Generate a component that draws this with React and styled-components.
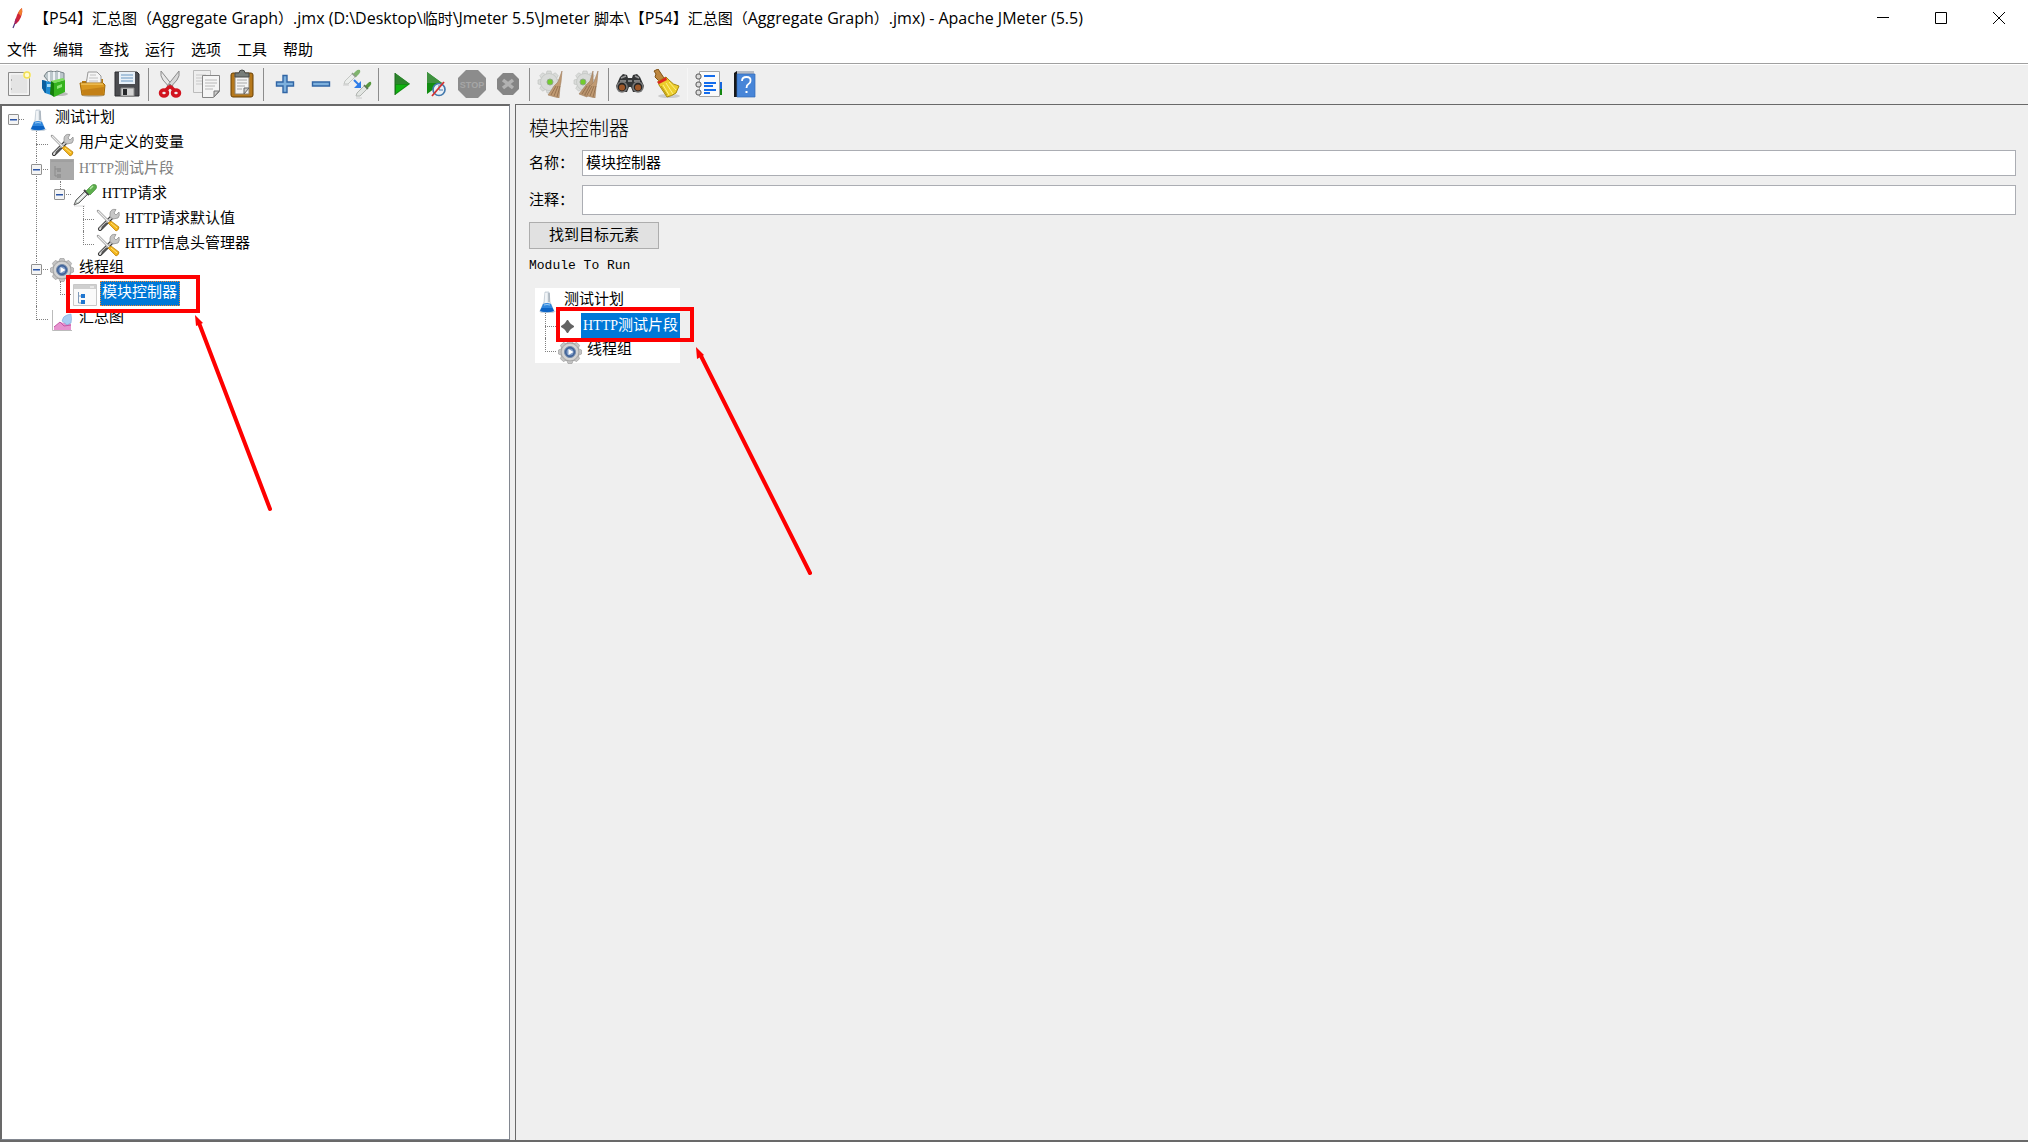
import React, { useState } from "react";
import styled, { createGlobalStyle } from "styled-components";

const GlobalStyle = createGlobalStyle`
  * {
    box-sizing: border-box;
  }
  body {
    margin: 0;
    background: #efefef;
    color: #000;
    font-family: "Liberation Mono", "Noto Sans CJK SC", monospace;
    font-size: 15px;
    text-spacing-trim: space-all;
  }
  button,
  input {
    font: inherit;
    color: inherit;
  }
`;

// Styled Components
const Window = styled.div`
  position: relative;
  display: flex;
  flex-direction: column;
  height: 100vh;
  overflow: hidden;
`;

const TitleBar = styled.header`
  display: flex;
  align-items: center;
  height: 36px;
  padding-left: 8px;
  background: #fff;
`;

const WindowTitle = styled.h1`
  flex: 1;
  margin: 0;
  padding-left: 8px;
  font: 400 15px/36px "Noto Sans CJK SC", sans-serif;
  white-space: pre;
`;

const TitleLatin = styled.span`
  font-family: "Open Sans", sans-serif;
  font-size: 16px;
`;

const WindowButton = styled.button`
  display: flex;
  align-items: center;
  justify-content: center;
  width: 58px;
  height: 36px;
  padding: 0;
  border: none;
  background: none;
  &:hover {
    background: #e5e5e5;
  }
`;

const MenuBar = styled.nav`
  display: flex;
  gap: 16px;
  height: 28px;
  padding-left: 7px;
  background: #fff;
  border-bottom: 1px solid #a0a0a0;
`;

const MenuItem = styled.button`
  padding: 0 0 2px;
  border: none;
  background: none;
  font: 400 15px/24px "Noto Sans", "Noto Sans CJK SC", sans-serif;
`;

const ToolBar = styled.div`
  display: flex;
  align-items: center;
  height: 40px;
  border-top: 1px solid #fff;
`;

const ToolButton = styled.button`
  display: flex;
  align-items: center;
  justify-content: center;
  width: 36px;
  height: 36px;
  padding: 0 0 1px 1px;
  border: none;
  background: none;
`;

const Separator = styled.div`
  width: 1px;
  height: 33px;
  margin: 0 2px 0 4px;
  background: ${(props) => (props.$faint ? "#f6f6f6" : "#8c8c8c")};
`;

const Panes = styled.main`
  flex: 1;
  display: grid;
  grid-template-columns: minmax(200px, 510px) 1fr;
  column-gap: 5px;
  border-bottom: 2px solid #696969;
`;

const TreePane = styled.div`
  background: #fff;
  border: 1px solid #828790;
  border-top: 2px solid #696969;
  border-left: 2px solid #696969;
`;

const EditorPane = styled.section`
  padding: 10px 12px 12px 13px;
  border-top: 1px solid #696969;
  border-left: 1px solid #696969;
`;

const TreeList = styled.ul`
  margin: 0;
  padding: 0;
  list-style: none;
`;

const TreeRow = styled.li`
  display: flex;
  height: 25px;
`;

// one column of the dotted guide lines in front of a node
const Guide = styled.span`
  display: grid;
  grid-template: 14px 11px / 12px 12px;
  width: 24px;
  &:first-child {
    grid-template-columns: 10px 12px;
    width: 22px;
  }
  &:nth-child(n + 3) {
    grid-template-columns: 12px 11px;
    width: 23px;
  }
  &::before {
    content: "";
    grid-area: 1 / 2 / ${(props) => (props.$through ? 3 : 2)} / 3;
    border-left: ${(props) => (props.$line ? "1px dotted #808080" : "none")};
  }
  &::after {
    content: "";
    grid-area: 1 / 2;
    border-bottom: ${(props) => (props.$elbow ? "1px dotted #808080" : "none")};
  }
`;

const Expander = styled.button`
  grid-area: 1 / 1 / 3 / 3;
  place-self: center;
  display: flex;
  align-items: center;
  justify-content: center;
  z-index: 1;
  width: 11px;
  height: 11px;
  margin-top: 2px;
  padding: 0;
  border: 1px solid #919191;
  border-radius: 1px;
  background: #f4f4f4;
  &::before {
    content: "";
    width: 7px;
    height: 1px;
    background: #2c55a5;
    box-shadow: 0 1px 0 #8ea6d3;
  }
`;

const NodeIcon = styled.span`
  display: flex;
  align-items: center;
  justify-content: center;
  width: ${(props) => (props.$small ? "20px" : "24px")};
  height: 25px;
  margin-left: ${(props) => (props.$flush ? "0" : "2px")};
  margin-right: 3px;
  padding-top: 2px;
`;

const NodeLabel = styled.span`
  padding: 0 ${(props) => (props.$focused ? "3px" : "2px")} 0 2px;
  line-height: 26px;
  white-space: nowrap;
  color: ${(props) => (props.$selected ? "#fff" : props.$disabled ? "#808080" : "#000")};
  background: ${(props) => (props.$selected ? "#0078d7" : "none")};
  outline: ${(props) => (props.$focused ? "1px dotted #ff8728" : "none")};
  outline-offset: -1px;
`;

const Latin = styled.span`
  font-family: "Liberation Serif", serif;
  font-size: 14px;
`;

const EditorTitle = styled.h2`
  margin: 0 0 9px;
  font: 300 20px/26px "Noto Sans CJK SC", sans-serif;
`;

const Form = styled.form`
  display: grid;
  grid-template-columns: 53px 1fr;
  grid-template-rows: 26px 30px;
  row-gap: 9px;
  align-items: center;
`;

const FieldLabel = styled.label`
  padding-top: 4px;
  line-height: 24px;
  white-space: nowrap;
`;

const TextInput = styled.input`
  width: 100%;
  height: 100%;
  padding: 0 3px 2px;
  border: 1px solid #abadb3;
  background: #fff;
`;

const FindButton = styled.button`
  display: block;
  width: 130px;
  height: 27px;
  margin: 7px 0;
  padding: 0 0 3px;
  border: 1px solid #adadad;
  background: #e1e1e1;
`;

const Caption = styled.p`
  margin: 0 0 12px;
  font-size: 13px;
  line-height: 20px;
`;

const ModuleTree = styled.div`
  width: 145px;
  margin-left: 6px;
  background: #fff;
`;

const ModuleGuide = styled(Guide)`
  &:first-child {
    grid-template-columns: 10px 11px;
    width: 21px;
  }
`;

const Annotations = styled.svg`
  position: absolute;
  left: 0;
  top: 0;
  pointer-events: none;
`;

const Flask = () => (
  <svg width="20" height="24" viewBox="0 0 20 24">
    <path d="M2 21h17l-3 2H4z" fill="#c9d3dd" />
    <path d="M8 2h4l1 10 4 9q-7 2-14 0l4-9z" fill="#e3e9ee" stroke="#b8c3cd" strokeWidth=".7" />
    <path d="M6 14q4-2 8 0l3 7q-7 2.500-14 0z" fill="#2f86dd" />
    <path d="M4.500 18h11l1.300 3q-7 2-13.600 0z" fill="#0c63c4" />
    <path d="M7 15q3-1 6 0" stroke="#9accf5" fill="none" />
    <path d="M9 3v10" stroke="#fff" />
    <path d="M12 3v9" stroke="#8e9aa5" />
  </svg>
);

const Tools = () => (
  <svg width="24" height="24" viewBox="0 0 24 24">
    <path d="M4 21 16 9" stroke="#333" strokeWidth="4" strokeLinecap="round" />
    <path d="M4 20.500 16 9" stroke="#d0d0d0" strokeWidth="2" />
    <path d="M6 20 11 15" stroke="#555" strokeWidth="2" />
    <path d="M20 1.500q-5-1-6 3.500v4l3 2 5-1q2-2 1-6l-3 3-2-2z" fill="#c7c7c7" stroke="#888" strokeWidth=".7" />
    <path d="M2 3 13 14" stroke="#999" strokeWidth="2.500" strokeLinecap="round" />
    <path d="M2 3 13 14" stroke="#ededed" strokeWidth="1.200" />
    <path d="m12 15 3-2 8 6q0 3-3 4z" fill="#f3b51b" stroke="#b27809" strokeWidth=".7" />
    <path d="m15 15 6 5" stroke="#ffe27a" />
    <circle cx="4" cy="21" r="1" fill="#eee" />
  </svg>
);

const Gear = () => (
  <svg width="24" height="24" viewBox="0 0 24 24">
    <g fill="#c5c5c5" stroke="#969696" strokeWidth=".6">
      {[0, 45, 90, 135, 180, 225, 270, 315].map((a) => (
        <path key={a} d="M8.500 4 10 .5h4L15.500 4z" transform={`rotate(${a} 12 12)`} />
      ))}
      <circle cx="12" cy="12" r="9" />
    </g>
    <circle cx="12" cy="12" r="8" fill="#d4d4d4" />
    <circle cx="12" cy="12" r="5.500" fill="#3b5f98" stroke="#778dab" />
    <circle cx="12" cy="12" r="3.500" fill="#7f9cc6" />
    <path d="m10.500 9 5 3-5 3z" fill="#fff" />
  </svg>
);

const Dropper = () => (
  <svg width="24" height="24" viewBox="0 0 24 24">
    <path d="M1 23h11" stroke="#ddd" />
    <path d="m1 22 2-5 9-9 3 3-9 9z" fill="#c3cac6" stroke="#666" />
    <path d="m4 19 9-9" stroke="#fff" strokeWidth="1.500" />
    <path d="m11 7 5 5" stroke="#444" strokeWidth="2" />
    <path d="m13 8 4-4q3-4 6-2 2 3-2 6l-4 4z" fill="#5cae4c" stroke="#4c9140" strokeWidth=".7" />
    <path d="m17 6 3-3" stroke="#b1e5a2" strokeWidth="1.500" />
  </svg>
);

const FragmentIcon = () => (
  <svg width="24" height="21" viewBox="0 0 24 21">
    <path fill="#a9a9a9" d="M0 0h24v21H0z" />
    <path d="M1 2h22" stroke="#969696" />
    <path d="M5 7v10h4M5 10h4" stroke="#8b8b8b" fill="none" />
    <path d="M7 9h4v4H7zM7 15h4v4H7z" fill="#949494" />
  </svg>
);

const ControllerIcon = () => (
  <svg width="24" height="22" viewBox="0 0 24 22">
    <path d="M.5.5h23v21H.5z" fill="#fafafa" stroke="#c8c8c8" />
    <path d="M1 1h22v4H1z" fill="#cfcfcf" />
    <path d="M17 3h4" stroke="#fff" />
    <path d="M5.500 8v11H9M5.500 12H9" stroke="#7f9aba" fill="none" />
    <path d="M8 10h4v4H8zM8 16h4v4H8z" fill="#1f76d0" />
  </svg>
);

const GraphIcon = () => (
  <svg width="24" height="24" viewBox="0 0 24 24">
    <path d="M2.500 2v20.500H22" stroke="#bbb" fill="none" />
    <path d="M4 22v-3l6-5 4 1 3-2 4 3v6z" fill="#e692cf" />
    <path d="M12 13q1-5 5-6l4-1q1 5 0 9l-4 2z" fill="#a9cdf2" stroke="#79a7d9" strokeWidth=".6" />
    <path d="m4 19 6-5 4 4 7-1" stroke="#c458a5" fill="none" />
  </svg>
);

const Diamond = () => (
  <svg width="13" height="13" viewBox="0 0 13 13">
    <path d="M6 0h1l2 3 1 1 3 2v1l-3 2-1 1-2 3H6l-2-3-1-1-3-2V6l3-2 1-1z" fill="#636363" />
  </svg>
);

const NewFile = () => (
  <svg width="26" height="28" viewBox="0 0 26 28">
    <path d="M2.500 2.500h21v23h-21z" fill="#ececec" stroke="#8b8b8b" />
    <path d="M4 4h18v20H4z" fill="#e4e4e4" stroke="#fafafa" />
    <path d="M5 10h1M5 19h1" stroke="#777" />
    <circle cx="21" cy="5" r="4" fill="#fffbd0" />
    <circle cx="21" cy="5" r="3" fill="none" stroke="#f0dd55" strokeWidth="1.500" />
  </svg>
);

const Templates = () => (
  <svg width="28" height="28" viewBox="0 0 28 28">
    <ellipse cx="18" cy="24" rx="9" ry="2" fill="#bbb" />
    <path d="m3 6 3-4 4-1 3 1 3-1 7 2v9l-10 6z" fill="#bcc7cb" stroke="#788488" />
    <path d="M8 2v9M13 2v9M18 2v9" stroke="#eef3f5" strokeWidth="2" />
    <path d="m1 10 12 3v13l-9-3-3-5z" fill="#1f8bd2" />
    <path d="m1 10 4 1v12l-1 0-3-5z" fill="#0b5f9f" />
    <path d="M6 14h5v3H6z" fill="#a4dafa" />
    <path d="m13 13 11-3v12l-11 5z" fill="#35b31e" />
    <path d="m10 11 12-3 2 2-11 3z" fill="#7bde5c" />
    <path d="m10 11 3 2v14l-4-3z" fill="#167d0b" />
    <path d="m16 16 5-2v3l-5 2z" fill="#8fe879" />
  </svg>
);

const OpenFolder = () => (
  <svg width="30" height="28" viewBox="-3 0 30 28">
    <ellipse cx="14" cy="25" rx="12" ry="2" fill="#c6c1b5" />
    <path d="M3 11h4l1-2h16v5H3z" fill="#b8790f" />
    <path d="M7 15 9 2h9l4 4v9z" fill="#f5f5f5" stroke="#999" />
    <path d="M11 5h6M10 8h9M10 11h9" stroke="#c0c0c0" />
    <path d="M1 13h23l2 2-1 10H3z" fill="#d99820" stroke="#a36a0a" />
    <path d="M2 14h22" stroke="#ffd774" />
    <path d="m3 20 22-3-1 8H4z" fill="#c38016" />
  </svg>
);

const Save = () => (
  <svg width="28" height="28" viewBox="0 0 28 28">
    <path d="M2 2h22l2 2v22H2z" fill="#4b4c50" stroke="#2d2d30" />
    <path d="M6 2h16v12H6z" fill="#e8f0f8" />
    <path d="M8 5h12M8 8h12M8 11h12" stroke="#92b4d2" strokeWidth="1.500" />
    <path d="M8 18h13v8H8z" fill="#d3d3d3" stroke="#888" />
    <path d="M10 19h4v6h-4z" fill="#26272a" />
  </svg>
);

const Cut = () => (
  <svg width="26" height="28" viewBox="0 0 26 28">
    <path d="M4 1q-1 5 2 9l8 9 2-3z" fill="#e8e8e8" stroke="#8b8b8b" />
    <path d="M22 1q1 5-2 9l-8 9-2-3z" fill="#d8d8d8" stroke="#8b8b8b" />
    <circle cx="13" cy="15" r="1" fill="#666" />
    <g fill="none" stroke="#d21520" strokeWidth="3.500">
      <ellipse cx="7" cy="23" rx="3.500" ry="3" />
      <ellipse cx="19" cy="23" rx="3.500" ry="3" />
      <path d="m9 20 3-3 2 0 3 3" />
    </g>
  </svg>
);

const Copy = () => (
  <svg width="30" height="30" viewBox="0 0 30 30">
    <path d="M2.500 1.500h17v22h-17z" fill="#eee" stroke="#bbb" />
    <path d="M5 6h10M5 9h10M5 12h6M5 15h6" stroke="#c8c8c8" />
    <path d="M11.500 6.500h17v16l-6 6h-11z" fill="#f5f5f5" stroke="#858585" />
    <path d="M14 11h12M14 14h12M14 17h10M14 20h8" stroke="#b8b8b8" />
    <path d="M28 22h-5v6z" fill="#ccc" stroke="#777" />
  </svg>
);

const Paste = () => (
  <svg width="28" height="30" viewBox="0 0 28 30">
    <rect x="3" y="4" width="22" height="24" rx="2" fill="#b6781b" stroke="#684004" />
    <path d="M7 6h14v19H7z" fill="#f4f4f4" stroke="#8c8170" />
    <path d="M9 11h10M9 14h10M9 17h8M9 20h5" stroke="#a8a8a8" />
    <path d="M21 19h-5v6z" fill="#ccc" stroke="#666" />
    <path d="M7 4h4q0-3 3-3t3 3h4v4H7z" fill="#777d79" stroke="#484b49" />
  </svg>
);

const Plus = () => (
  <svg width="20" height="20" viewBox="0 0 20 20">
    <path d="M8 1.500h4V8h6.500v4H12v6.500H8V12H1.500V8H8z" fill="#7db0dd" stroke="#3165a5" strokeWidth="1.400" />
  </svg>
);

const Minus = () => (
  <svg width="20" height="20" viewBox="0 0 20 20">
    <path d="M1.500 8h17v4h-17z" fill="#7db0dd" stroke="#3165a5" strokeWidth="1.400" />
  </svg>
);

const Toggle = () => (
  <svg width="30" height="30" viewBox="0 0 30 30">
    <path d="m2 15 1-3 7-7 3 3-7 7z" fill="#eceeec" stroke="#c2c5c2" />
    <path d="m11 5 3-3q2-2 4-1 1 2-1 4l-3 3z" fill="#7fb46c" />
    <path d="m10 4 4 4" stroke="#8c9c86" strokeWidth="1.500" />
    <path d="M1 16h6M14 29h6" stroke="#ccc" />
    <path d="m14 27 1-3 7-7 3 3-7 7z" fill="#e2e5e2" stroke="#b0b4b0" />
    <path d="m23 17 3-3q2-2 3-1 1 2-1 4l-3 3z" fill="#58983f" />
    <path d="m22 16 4 4" stroke="#5d7455" strokeWidth="1.500" />
    <path d="m12 11 5 5" stroke="#2f7de8" strokeWidth="2" />
    <path d="M19 12v7h-7z" fill="#2f7de8" />
  </svg>
);

const Start = () => (
  <svg width="22" height="24" viewBox="-4 0 22 24">
    <path d="m2 1 15 11L2 23z" fill="#128d12" />
    <path d="m2 1 15 11H2z" fill="#2d842d" />
    <path d="m3 13h11L3 21z" fill="#11b511" />
    <path d="M2 1v22" stroke="#1a6b1a" />
  </svg>
);

const StartNoTimers = () => (
  <svg width="22" height="26" viewBox="0 0 22 26">
    <path d="m2 1 15 11L2 23z" fill="#128d12" />
    <path d="m2 1 15 11H2z" fill="#3f923f" />
    <circle cx="14" cy="18.500" r="6" fill="#eaf0f6" stroke="#4379ad" strokeWidth="1.700" />
    <path d="M14 14v5h4" stroke="#497db0" fill="none" />
    <path d="M7 25 19 11" stroke="#d23030" strokeWidth="1.800" />
  </svg>
);

const StopSign = () => (
  <svg width="28" height="28" viewBox="0 0 28 28">
    <path d="M8 0h12l8 8v12l-8 8H8l-8-8V8z" fill="#8c8c8c" />
    <text x="14" y="18" textAnchor="middle" fontFamily="Liberation Sans, sans-serif" fontSize="9" fontWeight="700" fill="#a6a6a6">
      STOP
    </text>
  </svg>
);

const Shutdown = () => (
  <svg width="24" height="24" viewBox="0 0 24 24">
    <path d="M7 1h10l6 6v10l-6 6H7l-6-6V7z" fill="#858585" />
    <path d="m7 8 10 8M17 8 7 16" stroke="#b2b2b2" strokeWidth="3.500" />
  </svg>
);

const Clear = ({ all }) => (
  <svg width="28" height="28" viewBox="0 0 28 28">
    <g fill="#d9dbd9" stroke="#bcbfbc" strokeWidth=".6">
      {[0, 45, 90, 135, 180, 225, 270, 315].map((a) => (
        <path key={a} d="M9 5 10 1h4l1 4z" transform={`rotate(${a} 12 12)`} />
      ))}
      <circle cx="12" cy="12" r="8.500" />
    </g>
    <circle cx={all ? 10 : 13} cy="12" r="3" fill="#72cc2e" stroke="#91a888" />
    {all && <path d="m20 1-3 10-4 4q-4 5-7 9l8 3 4-8 2-7z" fill="#b9946e" stroke="#a07e5e" strokeWidth=".6" />}
    <path d="m25 1-4 11-4 4q-3 5-6 9l11 3 1-11 1-5z" fill="#c09a72" stroke="#a07e5e" strokeWidth=".6" />
    <path d="m19 16-5 9M21 16l-4 10M23 16l-3 11" stroke="#8d6a49" strokeWidth=".8" />
    {all && <path d="m14 16-5 8M17 15l-5 10" stroke="#8d6a49" strokeWidth=".8" />}
  </svg>
);

const Binoculars = () => (
  <svg width="30" height="24" viewBox="0 0 30 24">
    <path d="m5 5 3-3 4 1 1 3h4l1-3 4-1 3 3 4 9-3 6h-8l-2-5h-2l-2 5H4l-3-6z" fill="#343637" />
    <path d="m6 6 5-2M20 4l4 2M5 9h6M19 9h6M13 9h4" stroke="#999" strokeWidth="1.500" />
    <circle cx="7" cy="15" r="5" fill="#252525" stroke="#777" strokeWidth="1.500" />
    <circle cx="23" cy="15" r="5" fill="#252525" stroke="#777" strokeWidth="1.500" />
    <circle cx="7" cy="15.500" r="3" fill="#9c5628" />
    <circle cx="23" cy="15.500" r="3" fill="#9c5628" />
  </svg>
);

const Broom = () => (
  <svg width="30" height="30" viewBox="0 0 30 30">
    <ellipse cx="18" cy="27" rx="11" ry="2" fill="#ccc" />
    <path d="m3 2 4-2 6 9-5 3-4-4 1-3z" fill="#bd8740" stroke="#815215" />
    <path d="m7 12 8-4 3 3q4 5 10 6l-3 7q-4 3-9 4-4-6-8-12z" fill="#edce2c" stroke="#a88910" />
    <path d="m6 13 9-5 1 3-8 4z" fill="#dc2620" />
    <path d="m12 16 6 10M15 14l7 11M18 13l7 8" stroke="#fff187" />
    <path d="m10 17 6 9" stroke="#b99813" />
  </svg>
);

const FunctionHelper = () => (
  <svg width="28" height="28" viewBox="0 0 28 28">
    <path d="M24 12h3v7h-3z" fill="#1767dc" />
    <path d="M24 19h3v6h-3z" fill="#12860f" />
    <path d="M4.500 1.500h20v25h-20z" fill="#fafafa" stroke="#a5a5a5" />
    <path d="M9 6h11M9 13h12M9 16h9M9 20h12M9 23h6" stroke="#146cec" strokeWidth="2" />
    <g fill="#ddd" stroke="#555">
      <rect x="1" y="4" width="5" height="5" rx="2" />
      <rect x="1" y="12" width="5" height="5" rx="2" />
      <rect x="1" y="20" width="5" height="5" rx="2" />
    </g>
  </svg>
);

const HelpBook = () => (
  <svg width="24" height="28" viewBox="0 0 24 28">
    <path d="M3 1h18v3H3z" fill="#b5bbc5" />
    <path d="M1 3 4 1v26H1z" fill="#161719" />
    <path d="M4 4h18v23H4z" fill="#4785d8" stroke="#326cb7" strokeWidth=".7" />
    <path d="M9 11q0-4 4.500-4t4 4q0 2-2 3t-2 4" stroke="#fff" strokeWidth="1.800" fill="none" />
    <path d="M12.500 21h2v2h-2z" fill="#fff" />
  </svg>
);

const Feather = () => (
  <svg width="18" height="24" viewBox="0 0 18 24">
    <path d="m5 22 2-5" stroke="#513781" strokeWidth="1.200" />
    <path d="M7 18q-1-2 1-6 2-7 6-10 1 4-1 9-2 5-5 7z" fill="#ce2438" />
    <path d="M10 7q2-4 4-5 1 4-1 8z" fill="#f17e2d" />
    <path d="M7 18q-1-2 1-6l1 4z" fill="#a12067" />
  </svg>
);

const title =
  "【P54】汇总图（Aggregate Graph）.jmx (D:\\Desktop\\临时\\Jmeter 5.5\\Jmeter 脚本\\【P54】汇总图（Aggregate Graph）.jmx) - Apache JMeter (5.5)";

const menus = ["文件", "编辑", "查找", "运行", "选项", "工具", "帮助"];

const tools = [
  [["新建", <NewFile />], ["模板", <Templates />], ["打开", <OpenFolder />], ["保存", <Save />]],
  [["剪切", <Cut />], ["复制", <Copy />], ["粘贴", <Paste />]],
  [["展开", <Plus />], ["折叠", <Minus />], ["切换", <Toggle />]],
  [["启动", <Start />], ["不停顿启动", <StartNoTimers />], ["停止", <StopSign />], ["关闭", <Shutdown />]],
  [["清除", <Clear />], ["清除全部", <Clear all />]],
  [["搜索", <Binoculars />], ["重置搜索", <Broom />]],
  [["函数助手", <FunctionHelper />], ["帮助主题", <HelpBook />]],
];

// guides: "|" passes through, "+" branches, "L" ends, "-" and "=" hold an expander, " " empty
const planTree = [
  { guides: "-", icon: <Flask />, text: "测试计划" },
  { guides: " +", icon: <Tools />, text: "用户定义的变量" },
  { guides: " =", icon: <FragmentIcon />, latin: "HTTP", text: "测试片段", disabled: true },
  { guides: " |-", icon: <Dropper />, latin: "HTTP", text: "请求" },
  { guides: " | +", icon: <Tools />, latin: "HTTP", text: "请求默认值" },
  { guides: " | L", icon: <Tools />, latin: "HTTP", text: "信息头管理器" },
  { guides: " =", icon: <Gear />, text: "线程组" },
  { guides: " |L", icon: <ControllerIcon />, text: "模块控制器", selected: true, focused: true },
  { guides: " L", icon: <GraphIcon />, text: "汇总图" },
];

const moduleTree = [
  { guides: "", icon: <Flask />, text: "测试计划" },
  { guides: "+", icon: <Diamond />, latin: "HTTP", text: "测试片段", selected: true, small: true },
  { guides: "L", icon: <Gear />, text: "线程组" },
];

const Tree = ({ nodes, guide: GuideColumn = Guide, label }) => (
  <TreeList role="tree" aria-label={label}>
    {nodes.map((node, row) => (
      <TreeRow key={row} role="treeitem" aria-selected={!!node.selected}>
        {[...node.guides].map((g, i) => (
          <GuideColumn
            key={i}
            $line={g !== " " && !(g === "-" && i === 0)}
            $through={"|+=".includes(g)}
            $elbow={"+L-=".includes(g)}
          >
            {"-=".includes(g) && <Expander aria-label={`折叠 ${node.text}`} />}
          </GuideColumn>
        ))}
        <NodeIcon $small={node.small} $flush={node.guides === ""}>{node.icon}</NodeIcon>
        <NodeLabel $selected={node.selected} $focused={node.focused} $disabled={node.disabled}>
          {node.latin && <Latin>{node.latin}</Latin>}
          {node.text}
        </NodeLabel>
      </TreeRow>
    ))}
  </TreeList>
);

const App = () => {
  const [name, setName] = useState("模块控制器");
  const [comment, setComment] = useState("");

  return (
    <Window>
      <GlobalStyle />
      <TitleBar>
        <Feather />
        <WindowTitle>
          {title.split(/([ -~]+)/).map((part, i) => (i % 2 ? <TitleLatin key={i}>{part}</TitleLatin> : part))}
        </WindowTitle>
        <WindowButton aria-label="最小化">
          <svg width="12" height="12"><path d="M0 5.500h12" stroke="#000" /></svg>
        </WindowButton>
        <WindowButton aria-label="最大化">
          <svg width="12" height="12"><path d="M.5.5h11v11H.5z" fill="none" stroke="#000" /></svg>
        </WindowButton>
        <WindowButton aria-label="关闭窗口">
          <svg width="12" height="12"><path d="m0 0 12 12M12 0 0 12" stroke="#000" /></svg>
        </WindowButton>
      </TitleBar>

      <MenuBar>
        {menus.map((menu) => (
          <MenuItem key={menu}>{menu}</MenuItem>
        ))}
      </MenuBar>

      <ToolBar role="toolbar">
        {tools.map((group, i) => (
          <React.Fragment key={i}>
            {i > 0 && <Separator $faint={i === 6} />}
            {group.map(([label, icon]) => (
              <ToolButton key={label} aria-label={label}>{icon}</ToolButton>
            ))}
          </React.Fragment>
        ))}
      </ToolBar>

      <Panes>
        <TreePane>
          <Tree nodes={planTree} label="测试计划" />
        </TreePane>
        <EditorPane>
          <EditorTitle>模块控制器</EditorTitle>
          <Form onSubmit={(e) => e.preventDefault()}>
            <FieldLabel htmlFor="name">名称：</FieldLabel>
            <TextInput id="name" value={name} onChange={(e) => setName(e.target.value)} />
            <FieldLabel htmlFor="comment">注释：</FieldLabel>
            <TextInput id="comment" value={comment} onChange={(e) => setComment(e.target.value)} />
          </Form>
          <FindButton>找到目标元素</FindButton>
          <Caption>Module To Run</Caption>
          <ModuleTree>
            <Tree nodes={moduleTree} guide={ModuleGuide} label="Module To Run" />
          </ModuleTree>
        </EditorPane>
      </Panes>

      {/* red marks over the two selected nodes */}
      <Annotations width="860" height="600" fill="none" stroke="#fe0000" strokeWidth="4">
        <path d="M68 277h130v34H68zM558 309h134v31H558z" />
        <path d="m199 323 71 186M701 356l109 217" strokeLinecap="round" />
        <path d="m195 315 8 8-7 3zM696 347l8 8-7 4z" fill="#fe0000" stroke="none" />
      </Annotations>
    </Window>
  );
};

export default App;
